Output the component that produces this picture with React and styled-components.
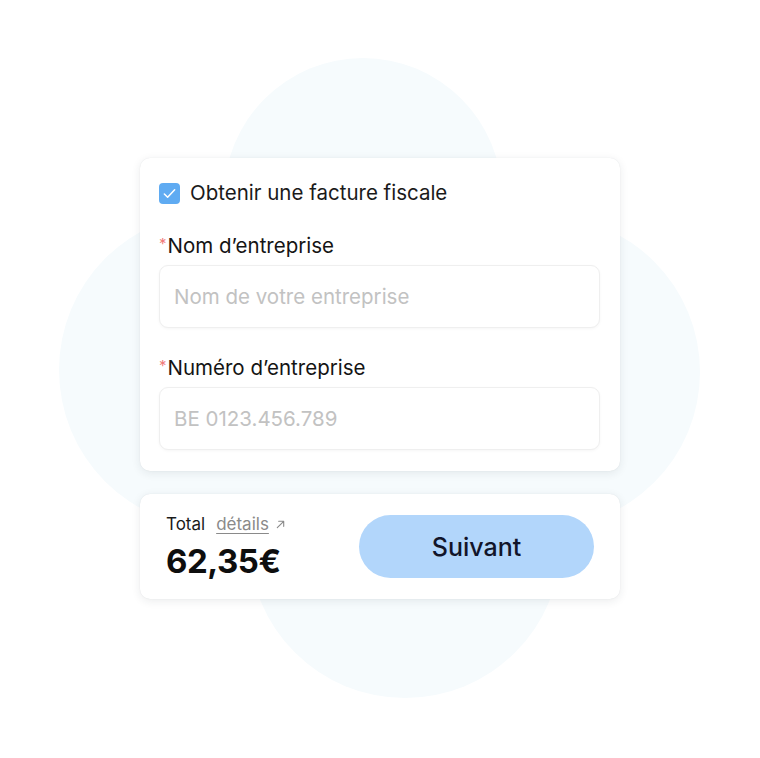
import React from 'react';
import styled, { createGlobalStyle } from 'styled-components';

const GlobalStyle = createGlobalStyle`
  html, body {
    margin: 0;
    padding: 0;
    background: #ffffff;
  }
  body {
    font-family: Inter, "Noto Sans", sans-serif;
    color: #141414;
  }
`;

const Stage = styled.div`
  position: relative;
  width: 760px;
  height: 758px;
  overflow: hidden;
`;

// faint four-lobed blob behind the cards
const Blob = styled.svg`
  position: absolute;
  left: 0;
  top: 0;
  z-index: 0;
`;

const Column = styled.div`
  position: relative;
  z-index: 1;
  display: flex;
  flex-direction: column;
  gap: 23px;
  width: 480px;
  padding: 158px 0 0 140px;
`;

const Card = styled.div`
  background: #ffffff;
  border-radius: 10px;
  box-shadow: 0 2px 10px rgba(30, 40, 60, 0.09), 0 0 1px rgba(30, 40, 60, 0.12);
  padding: ${(p) => p.$padding};
`;

const CheckRow = styled.label`
  display: flex;
  align-items: center;
  gap: 10px;
  font-size: 20.5px;
  line-height: 24px;
  color: #1a1a1a;
`;

const Box = styled.span`
  width: 21px;
  height: 21px;
  border-radius: 4px;
  background: #5fabf2;
  display: flex;
  align-items: center;
  justify-content: center;
`;

const Field = styled.div`
  display: flex;
  flex-direction: column;
  gap: 7px;
  margin-top: ${(p) => p.$top}px;
`;

const Label = styled.div`
  font-size: 20.5px;
  line-height: 24px;
  color: #141414;
`;

const Star = styled.span`
  color: #f07a7a;
  font-size: 15px;
  vertical-align: 4px;
  margin-right: 1px;
`;

const Input = styled.input`
  box-sizing: border-box;
  width: 100%;
  height: 63px;
  border: 1.5px solid #efefef;
  border-radius: 9px;
  box-shadow: 0 1px 3px rgba(0, 0, 0, 0.04);
  padding: 0 14px;
  font-family: Inter, "Noto Sans", sans-serif;
  font-size: 20.5px;
  color: #141414;
  outline: none;
  &::placeholder {
    color: #c2c2c2;
  }
`;

const Footer = styled.div`
  display: flex;
  align-items: center;
  justify-content: space-between;
`;

const TotalBlock = styled.div`
  display: flex;
  flex-direction: column;
  gap: 9px;
`;

const TotalLine = styled.div`
  display: flex;
  align-items: baseline;
  gap: 11px;
  font-size: 17px;
  line-height: 20px;
  color: #1a1a1a;
`;

const DetailsLink = styled.span`
  display: inline-flex;
  align-items: baseline;
  gap: 6px;
  color: #8a8a8a;
`;

const Underlined = styled.a`
  color: inherit;
  text-decoration: underline;
  text-underline-offset: 3px;
  text-decoration-thickness: 1px;
`;

const Amount = styled.div`
  font-size: 33px;
  font-weight: 700;
  letter-spacing: -0.5px;
  color: #0e0e0e;
  line-height: 36px;
`;

const Button = styled.button`
  width: 235px;
  height: 63px;
  border: none;
  border-radius: 32px;
  background: #b2d6fb;
  color: #12152a;
  font-family: Inter, "Noto Sans", sans-serif;
  font-size: 25px;
  font-weight: 500;
  cursor: pointer;
`;

const App = () => {
  return (
    <>
      <GlobalStyle />
      <Stage>
        <Blob width="760" height="758" viewBox="0 0 760 758">
          <g fill="#f6fbfd">
            <circle cx="363" cy="197" r="139" />
            <circle cx="217" cy="370" r="158" />
            <circle cx="544" cy="372" r="156" />
            <circle cx="405" cy="542" r="156" />
            <rect x="230" y="200" width="320" height="350" />
          </g>
        </Blob>
        <Column>
          <Card $padding="23px 20px 21px 19px">
            <CheckRow>
              <Box>
                <svg width="15" height="15" viewBox="0 0 16 16" fill="none">
                  <path d="M2.5 8.5l3.5 3.5 7.5-8" stroke="#ffffff" strokeWidth="1.6" strokeLinecap="round" strokeLinejoin="round" />
                </svg>
              </Box>
              Obtenir une facture fiscale
            </CheckRow>
            <Field $top={27}>
              <Label><Star>*</Star>Nom d’entreprise</Label>
              <Input placeholder="Nom de votre entreprise" />
            </Field>
            <Field $top={26}>
              <Label><Star>*</Star>Numéro d’entreprise</Label>
              <Input placeholder="BE 0123.456.789" />
            </Field>
          </Card>
          <Card $padding="20px 26px 20px 26px">
            <Footer>
              <TotalBlock>
                <TotalLine>
                  Total
                  <DetailsLink>
                    <Underlined>détails</Underlined>
                    <svg width="11" height="11" viewBox="0 0 12 12" fill="none">
                      <path d="M2.5 9.5l7-7M4 2.5h5.5V8" stroke="#8a8a8a" strokeWidth="1.2" strokeLinecap="round" strokeLinejoin="round" />
                    </svg>
                  </DetailsLink>
                </TotalLine>
                <Amount>62,35€</Amount>
              </TotalBlock>
              <Button>Suivant</Button>
            </Footer>
          </Card>
        </Column>
      </Stage>
    </>
  );
};

export default App;
